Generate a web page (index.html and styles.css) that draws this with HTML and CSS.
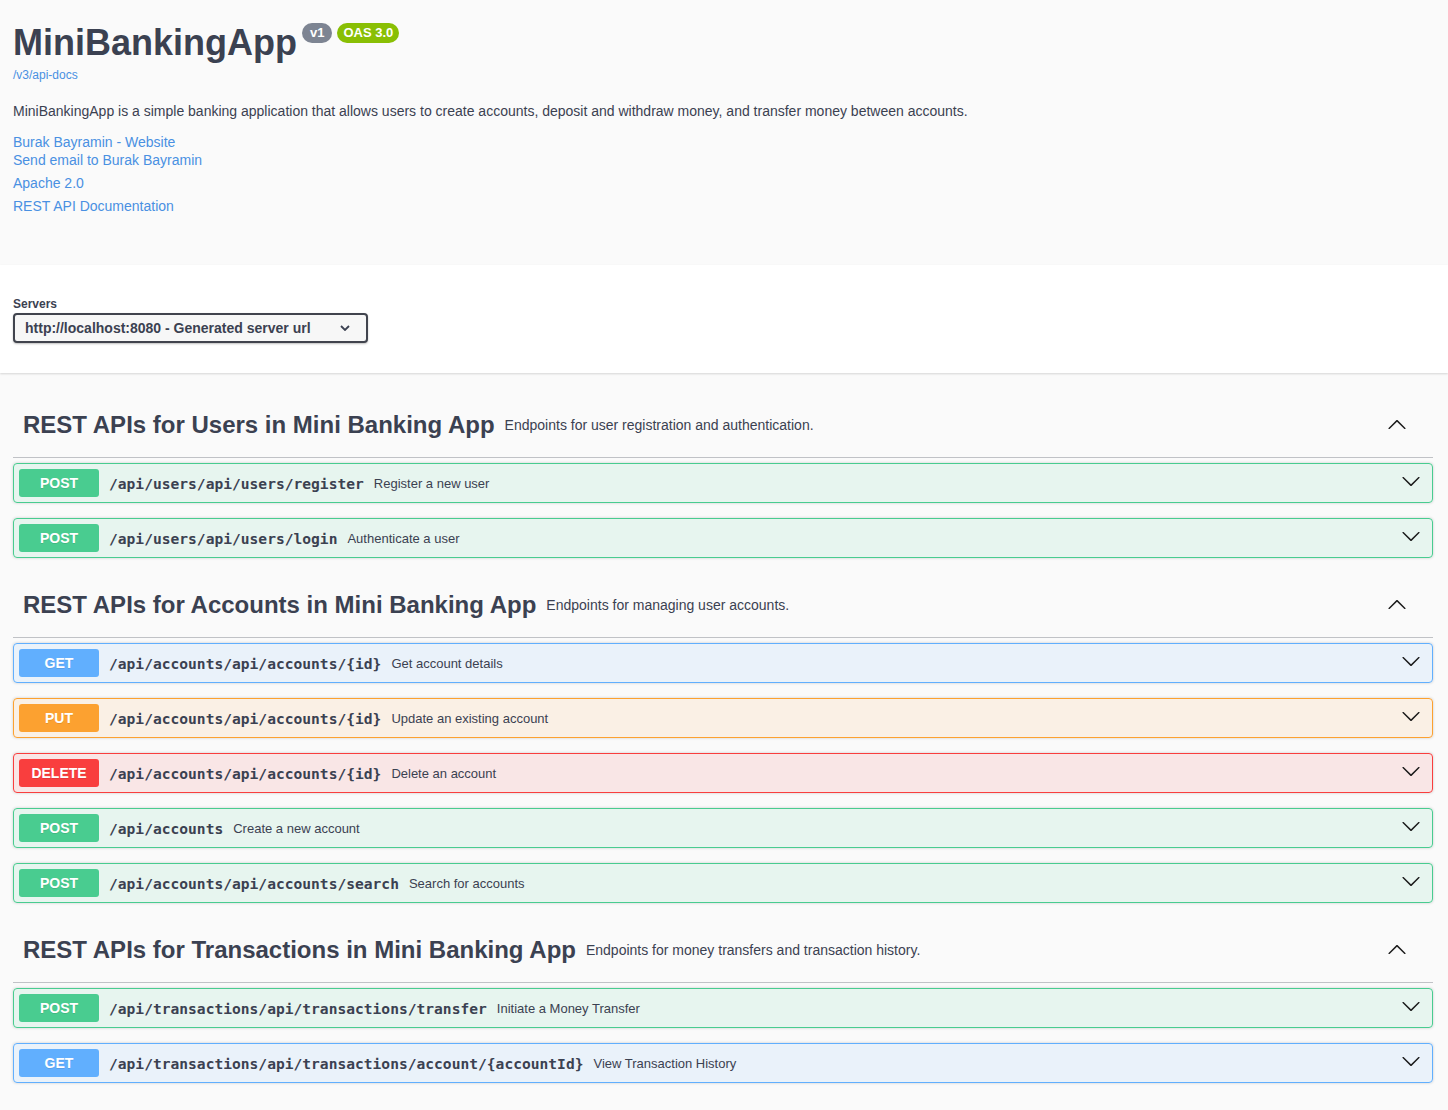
FILE: index.html
```html
<!DOCTYPE html>
<html lang="en">
<head>
<meta charset="utf-8">
<title>MiniBankingApp</title>
<link rel="stylesheet" href="styles.css">
</head>
<body>
<section class="info wrap">
  <div class="title-row">
    <h1 class="title">MiniBankingApp</h1>
    <span class="badge v1">v1</span>
    <span class="badge oas">OAS 3.0</span>
  </div>
  <a class="docs-link" href="#">/v3/api-docs</a>
  <p class="desc">MiniBankingApp is a simple banking application that allows users to create accounts, deposit and withdraw money, and transfer money between accounts.</p>
  <div class="contact">
    <a class="info-link" href="#">Burak Bayramin - Website</a>
    <a class="info-link" href="#">Send email to Burak Bayramin</a>
  </div>
  <a class="info-link gap" href="#">Apache 2.0</a>
  <a class="info-link gap" href="#">REST API Documentation</a>
</section>

<section class="scheme">
  <div class="wrap">
    <div class="servers-label">Servers</div>
    <div class="select">
      <span>http://localhost:8080 - Generated server url</span>
      <svg class="sel-arrow" viewBox="0 0 10 6" width="10" height="6"><polyline points="1,1 5,5 9,1" fill="none" stroke="#3b4151" stroke-width="1.8"/></svg>
    </div>
  </div>
</section>

<main class="ops-area wrap">
  <section class="tag-section">
    <div class="tag-header">
      <h3 class="tag-title">REST APIs for Users in Mini Banking App</h3>
      <span class="tag-desc">Endpoints for user registration and authentication.</span>
      <svg class="tag-arrow" viewBox="0 0 20 20"><g transform="rotate(180 10 10)"><path d="M17.418 6.109c.272-.268.709-.268.979 0s.271.701 0 .969l-7.908 7.83c-.27.268-.707.268-.979 0l-7.908-7.83c-.27-.268-.27-.701 0-.969.271-.268.709-.268.979 0L10 13.25l7.418-7.141z"/></g></svg>
    </div>
    <div class="op post"><span class="method">POST</span><span class="path">/api/users/api/users/register</span><span class="summary">Register a new user</span><svg class="op-arrow" viewBox="0 0 20 20"><path d="M17.418 6.109c.272-.268.709-.268.979 0s.271.701 0 .969l-7.908 7.83c-.27.268-.707.268-.979 0l-7.908-7.830c-.27-.268-.27-.701 0-.969.271-.268.709-.268.979 0L10 13.25l7.418-7.141z"/></svg></div>
    <div class="op post"><span class="method">POST</span><span class="path">/api/users/api/users/login</span><span class="summary">Authenticate a user</span><svg class="op-arrow" viewBox="0 0 20 20"><path d="M17.418 6.109c.272-.268.709-.268.979 0s.271.701 0 .969l-7.908 7.83c-.27.268-.707.268-.979 0l-7.908-7.83c-.27-.268-.27-.701 0-.969.271-.268.709-.268.979 0L10 13.25l7.418-7.141z"/></svg></div>
  </section>

  <section class="tag-section">
    <div class="tag-header">
      <h3 class="tag-title">REST APIs for Accounts in Mini Banking App</h3>
      <span class="tag-desc">Endpoints for managing user accounts.</span>
      <svg class="tag-arrow" viewBox="0 0 20 20"><g transform="rotate(180 10 10)"><path d="M17.418 6.109c.272-.268.709-.268.979 0s.271.701 0 .969l-7.908 7.83c-.27.268-.707.268-.979 0l-7.908-7.83c-.27-.268-.27-.701 0-.969.271-.268.709-.268.979 0L10 13.25l7.418-7.141z"/></g></svg>
    </div>
    <div class="op get"><span class="method">GET</span><span class="path">/api/accounts/api/accounts/{id}</span><span class="summary">Get account details</span><svg class="op-arrow" viewBox="0 0 20 20"><path d="M17.418 6.109c.272-.268.709-.268.979 0s.271.701 0 .969l-7.908 7.83c-.27.268-.707.268-.979 0l-7.908-7.83c-.27-.268-.27-.701 0-.969.271-.268.709-.268.979 0L10 13.25l7.418-7.141z"/></svg></div>
    <div class="op put"><span class="method">PUT</span><span class="path">/api/accounts/api/accounts/{id}</span><span class="summary">Update an existing account</span><svg class="op-arrow" viewBox="0 0 20 20"><path d="M17.418 6.109c.272-.268.709-.268.979 0s.271.701 0 .969l-7.908 7.83c-.27.268-.707.268-.979 0l-7.908-7.83c-.27-.268-.27-.701 0-.969.271-.268.709-.268.979 0L10 13.25l7.418-7.141z"/></svg></div>
    <div class="op delete"><span class="method">DELETE</span><span class="path">/api/accounts/api/accounts/{id}</span><span class="summary">Delete an account</span><svg class="op-arrow" viewBox="0 0 20 20"><path d="M17.418 6.109c.272-.268.709-.268.979 0s.271.701 0 .969l-7.908 7.83c-.27.268-.707.268-.979 0l-7.908-7.83c-.27-.268-.27-.701 0-.969.271-.268.709-.268.979 0L10 13.25l7.418-7.141z"/></svg></div>
    <div class="op post"><span class="method">POST</span><span class="path">/api/accounts</span><span class="summary">Create a new account</span><svg class="op-arrow" viewBox="0 0 20 20"><path d="M17.418 6.109c.272-.268.709-.268.979 0s.271.701 0 .969l-7.908 7.83c-.27.268-.707.268-.979 0l-7.908-7.83c-.27-.268-.27-.701 0-.969.271-.268.709-.268.979 0L10 13.25l7.418-7.141z"/></svg></div>
    <div class="op post"><span class="method">POST</span><span class="path">/api/accounts/api/accounts/search</span><span class="summary">Search for accounts</span><svg class="op-arrow" viewBox="0 0 20 20"><path d="M17.418 6.109c.272-.268.709-.268.979 0s.271.701 0 .969l-7.908 7.83c-.27.268-.707.268-.979 0l-7.908-7.83c-.27-.268-.27-.701 0-.969.271-.268.709-.268.979 0L10 13.25l7.418-7.141z"/></svg></div>
  </section>

  <section class="tag-section">
    <div class="tag-header">
      <h3 class="tag-title">REST APIs for Transactions in Mini Banking App</h3>
      <span class="tag-desc">Endpoints for money transfers and transaction history.</span>
      <svg class="tag-arrow" viewBox="0 0 20 20"><g transform="rotate(180 10 10)"><path d="M17.418 6.109c.272-.268.709-.268.979 0s.271.701 0 .969l-7.908 7.83c-.27.268-.707.268-.979 0l-7.908-7.83c-.27-.268-.27-.701 0-.969.271-.268.709-.268.979 0L10 13.25l7.418-7.141z"/></g></svg>
    </div>
    <div class="op post"><span class="method">POST</span><span class="path">/api/transactions/api/transactions/transfer</span><span class="summary">Initiate a Money Transfer</span><svg class="op-arrow" viewBox="0 0 20 20"><path d="M17.418 6.109c.272-.268.709-.268.979 0s.271.701 0 .969l-7.908 7.83c-.27.268-.707.268-.979 0l-7.908-7.83c-.27-.268-.27-.701 0-.969.271-.268.709-.268.979 0L10 13.25l7.418-7.141z"/></svg></div>
    <div class="op get"><span class="method">GET</span><span class="path">/api/transactions/api/transactions/account/{accountId}</span><span class="summary">View Transaction History</span><svg class="op-arrow" viewBox="0 0 20 20"><path d="M17.418 6.109c.272-.268.709-.268.979 0s.271.701 0 .969l-7.908 7.83c-.27.268-.707.268-.979 0l-7.908-7.83c-.27-.268-.27-.701 0-.969.271-.268.709-.268.979 0L10 13.25l7.418-7.141z"/></svg></div>
  </section>
</main>
</body>
</html>
```

FILE: styles.css
```css
body {
  margin: 0;
  background: #fafafa;
  font-family: "Liberation Sans", Arial, sans-serif;
  color: #3b4151;
}

.wrap {
  padding: 0 15px 0 13px;
}

/* Info */
.info {
  height: 265px;
  box-sizing: border-box;
  padding-top: 22px;
  display: flex;
  flex-direction: column;
  align-items: flex-start;
}

.title-row {
  display: flex;
  align-items: flex-start;
}

.title {
  margin: 0;
  font-size: 36px;
  line-height: 41px;
  font-weight: 700;
  color: #3b4151;
}

.badge {
  height: 20px;
  line-height: 20px;
  border-radius: 10px;
  font-size: 13px;
  font-weight: 700;
  color: #fff;
  margin-top: 1px;
}

.v1 {
  background: #7d8492;
  padding: 0 8px;
  margin-left: 5px;
}

.oas {
  background: #89bf04;
  padding: 0 6px;
  margin-left: 5px;
}

.docs-link {
  margin-top: 4px;
  font-size: 12px;
  line-height: 16px;
  color: #4990e2;
  text-decoration: none;
}

.desc {
  margin: 18px 0 0;
  font-size: 14px;
  line-height: 20px;
}

.contact {
  margin-top: 12px;
  display: flex;
  flex-direction: column;
  align-items: flex-start;
}

.info-link {
  font-size: 14px;
  line-height: 18px;
  color: #4990e2;
  text-decoration: none;
}

.info-link.gap {
  margin-top: 5px;
}

/* Servers */
.scheme {
  background: #fff;
  box-shadow: 0 1px 2px 0 rgba(0, 0, 0, 0.15);
  height: 108px;
  box-sizing: border-box;
  padding-top: 32px;
}

.servers-label {
  font-size: 12px;
  font-weight: 700;
  line-height: 15px;
}

.select {
  margin-top: 1px;
  width: 355px;
  height: 30px;
  box-sizing: border-box;
  border: 2px solid #41444e;
  border-radius: 4px;
  background: #f7f7f7;
  box-shadow: 0 1px 2px 0 rgba(0, 0, 0, 0.25);
  display: flex;
  align-items: center;
  justify-content: space-between;
  padding: 0 16px 0 10px;
  font-size: 14px;
  font-weight: 700;
  color: #3b4151;
}

/* Operations */
.ops-area {
  padding-top: 20px;
}

.tag-header {
  display: flex;
  align-items: center;
  height: 65px;
  box-sizing: border-box;
  padding: 0 20px 0 10px;
  border-bottom: 1px solid rgba(59, 65, 81, 0.3);
  margin-bottom: 5px;
}

.tag-title {
  margin: 0;
  font-size: 24px;
  font-weight: 700;
  color: #3b4151;
}

.tag-desc {
  flex: 1;
  padding: 0 10px;
  font-size: 14px;
}

.tag-arrow {
  width: 20px;
  height: 20px;
  margin-right: 6px;
  fill: #1b1b1b;
}

.op {
  display: flex;
  align-items: center;
  height: 40px;
  box-sizing: border-box;
  padding: 5px;
  border: 1px solid;
  border-radius: 4px;
  box-shadow: 0 0 3px rgba(0, 0, 0, 0.19);
  margin-bottom: 15px;
}

.method {
  width: 80px;
  height: 28px;
  line-height: 28px;
  text-align: center;
  border-radius: 3px;
  color: #fff;
  font-size: 14px;
  font-weight: 700;
  text-shadow: 0 1px 0 rgba(0, 0, 0, 0.1);
}

.path {
  padding: 0 10px;
  font-family: "DejaVu Sans Mono", "Liberation Mono", monospace;
  font-size: 14.6px;
  font-weight: 700;
  color: #3b4151;
}

.summary {
  flex: 1;
  font-size: 13px;
  color: #3b4151;
}

.op-arrow {
  width: 20px;
  height: 20px;
  margin-right: 6px;
  margin-top: -4px;
  fill: #1b1b1b;
}

.post { border-color: #49cc90; background: rgba(73, 204, 144, 0.1); }
.post .method { background: #49cc90; }
.get { border-color: #61affe; background: rgba(97, 175, 254, 0.1); }
.get .method { background: #61affe; }
.put { border-color: #fca130; background: rgba(252, 161, 48, 0.1); }
.put .method { background: #fca130; }
.delete { border-color: #f93e3e; background: rgba(249, 62, 62, 0.1); }
.delete .method { background: #f93e3e; }
```
